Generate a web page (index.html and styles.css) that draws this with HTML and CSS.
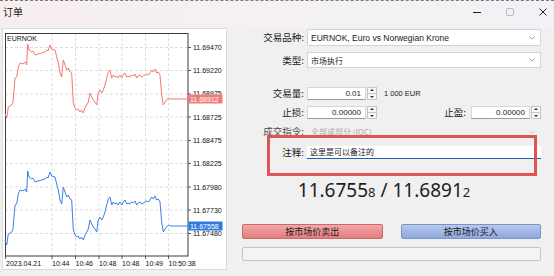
FILE: index.html
```html
<!DOCTYPE html>
<html lang="zh-CN">
<head>
    <meta charset="UTF-8">
    <title>订单</title>
    <link rel="stylesheet" href="styles.css">
</head>
<body>
    <div class="titlebar">
        <span class="title">订单</span>
        <div class="controls">
            <svg width="8" height="8" viewBox="0 0 8 8"><line x1="0" y1="4.5" x2="8" y2="4.5" stroke="#222" stroke-width="1"/></svg>
            <svg width="8" height="8" viewBox="0 0 8 8"><rect x="0.5" y="0.5" width="7" height="7" rx="1" fill="none" stroke="#b8b8b8" stroke-width="1"/></svg>
            <svg width="8" height="8" viewBox="0 0 8 8"><path d="M0.5 0.5 L7.5 7.5 M7.5 0.5 L0.5 7.5" stroke="#222" stroke-width="1"/></svg>
        </div>
    </div>

    <div class="content">
        <!-- tick chart -->
        <div class="chart-frame">
            <svg class="chart" width="223" height="240" viewBox="3 29 223 240">
                <defs>
                    <polyline id="ticks-line" points="5,113 6.7,118 8.3,107 11.7,105 13,102 15,78 16.7,77 18.3,67 20,63 23,64 25,62 26.7,65 27.7,44 29,50 31.7,52 33,51 35,55 38,54 41.7,53 45,52 46.7,50 48,51 50,45 51.7,49 55,50 56.7,57 58.3,63 60,73 61.7,77 63.3,60 65,65 66.7,70 68.3,68 70,72 71.7,73 73.3,103 75,108 76.7,110 78,109 80,112 81.5,110 83.3,113 85,108 86.7,105 88.3,102 90,93 91.7,97 93.3,100 95,102 96.7,105 98.3,93 100,90 101.7,93 103.3,90 105,85 106.7,78 108.3,72 110,70 111.7,78 113.3,75 115,77 116.7,76 118,78 120,75 121.7,78 123.3,75 125,73 126.7,77 128,76 130,77 131.5,75 133.3,76 135,74 136.7,78 138,76 140,75 141.5,77 143.3,76 145,75 146.7,74 148.5,75 150,73 151.7,70 153.3,72 155,69 156.7,73 158.3,72 160,75 161.7,95 163.3,105 165,102 166.7,100 168.3,98 170,99 188,99"/>
                </defs>
                <g class="grid">
                    <line x1="5" y1="47.5" x2="188" y2="47.5"/>
                    <line x1="5" y1="70.5" x2="188" y2="70.5"/>
                    <line x1="5" y1="94" x2="188" y2="94"/>
                    <line x1="5" y1="117" x2="188" y2="117"/>
                    <line x1="5" y1="140.5" x2="188" y2="140.5"/>
                    <line x1="5" y1="163.5" x2="188" y2="163.5"/>
                    <line x1="5" y1="187" x2="188" y2="187"/>
                    <line x1="5" y1="210" x2="188" y2="210"/>
                    <line x1="5" y1="233.5" x2="188" y2="233.5"/>
                    <line x1="52" y1="33" x2="52" y2="256"/>
                    <line x1="75.5" y1="33" x2="75.5" y2="256"/>
                    <line x1="99" y1="33" x2="99" y2="256"/>
                    <line x1="122" y1="33" x2="122" y2="256"/>
                    <line x1="145.5" y1="33" x2="145.5" y2="256"/>
                    <line x1="168.5" y1="33" x2="168.5" y2="256"/>
                </g>
                <g class="ticks">
                    <line x1="188" y1="47.5" x2="191" y2="47.5"/>
                    <line x1="188" y1="70.5" x2="191" y2="70.5"/>
                    <line x1="188" y1="94" x2="191" y2="94"/>
                    <line x1="188" y1="117" x2="191" y2="117"/>
                    <line x1="188" y1="140.5" x2="191" y2="140.5"/>
                    <line x1="188" y1="163.5" x2="191" y2="163.5"/>
                    <line x1="188" y1="187" x2="191" y2="187"/>
                    <line x1="188" y1="210" x2="191" y2="210"/>
                    <line x1="188" y1="233.5" x2="191" y2="233.5"/>
                    <line x1="5.5" y1="256" x2="5.5" y2="259"/>
                    <line x1="52" y1="256" x2="52" y2="259"/>
                    <line x1="75.5" y1="256" x2="75.5" y2="259"/>
                    <line x1="99" y1="256" x2="99" y2="259"/>
                    <line x1="122" y1="256" x2="122" y2="259"/>
                    <line x1="145.5" y1="256" x2="145.5" y2="259"/>
                    <line x1="168.5" y1="256" x2="168.5" y2="259"/>
                </g>
                <rect class="plot" x="5.5" y="33.5" width="182.5" height="222.5"/>

                <use href="#ticks-line" class="line-ask"/>
                <use href="#ticks-line" class="line-bid" transform="translate(0,127)"/>

                <g class="axis">
                    <text x="7" y="41">EURNOK</text>
                    <text x="193" y="50">11.69470</text>
                    <text x="193" y="73">11.69220</text>
                    <text x="193" y="96">11.68975</text>
                    <text x="193" y="119.5">11.68725</text>
                    <text x="193" y="143">11.68475</text>
                    <text x="193" y="166">11.68225</text>
                    <text x="193" y="189.5">11.67980</text>
                    <text x="193" y="212.5">11.67730</text>
                    <text x="193" y="236">11.67480</text>
                    <text x="6" y="266">2023.04.21</text>
                    <text x="52" y="266">10:44</text>
                    <text x="75.5" y="266">10:46</text>
                    <text x="99" y="266">10:48</text>
                    <text x="122" y="266">10:48</text>
                    <text x="145.5" y="266">10:49</text>
                    <text x="168.5" y="266">10:50:38</text>
                </g>

                <rect class="tag-ask" x="188.5" y="94.5" width="34" height="9"/>
                <text class="tag-text" x="190" y="101.5">11.68912</text>
                <rect class="tag-bid" x="188.5" y="221.5" width="34" height="9"/>
                <text class="tag-text" x="190" y="228.5">11.67558</text>
            </svg>
        </div>

        <!-- order form -->
        <div class="form">
            <div class="row row-symbol">
                <span class="label">交易品种:</span>
                <div class="select">
                    <span class="latin">EURNOK, Euro vs Norwegian Krone</span>
                    <svg class="chev" width="6" height="4" viewBox="0 0 6 4"><polyline points="0.5,0.5 3,3.2 5.5,0.5" fill="none" stroke="#8a8a8a" stroke-width="0.8"/></svg>
                </div>
            </div>
            <div class="row row-type">
                <span class="label">类型:</span>
                <div class="select">
                    <span class="cjk-val">市场执行</span>
                    <svg class="chev" width="6" height="4" viewBox="0 0 6 4"><polyline points="0.5,0.5 3,3.2 5.5,0.5" fill="none" stroke="#8a8a8a" stroke-width="0.8"/></svg>
                </div>
            </div>
            <div class="row row-volume">
                <span class="label">交易量:</span>
                <div class="num">0.01</div>
                <div class="spin"><span class="up"></span><span class="down"></span></div>
                <span class="lot">1 000 EUR</span>
            </div>
            <div class="row row-stops">
                <span class="label">止损:</span>
                <div class="num">0.00000</div>
                <div class="spin"><span class="up"></span><span class="down"></span></div>
                <span class="label label-tp">止盈:</span>
                <div class="num">0.00000</div>
                <div class="spin"><span class="up"></span><span class="down"></span></div>
            </div>
            <div class="row row-fill">
                <span class="label label-dim">成交指令:</span>
                <div class="select select-disabled">
                    <span class="cjk-val">全部或部分 (IOC)</span>
                    <svg class="chev" width="6" height="4" viewBox="0 0 6 4"><polyline points="0.5,0.5 3,3.2 5.5,0.5" fill="none" stroke="#c4c4c4" stroke-width="0.8"/></svg>
                </div>
            </div>
            <div class="row row-comment">
                <span class="label">注释:</span>
                <div class="comment">这里是可以备注的</div>
            </div>

            <div class="quote">11.6755<span class="small">8</span> / 11.6891<span class="small">2</span></div>

            <div class="actions">
                <button class="btn btn-sell">按市场价卖出</button>
                <button class="btn btn-buy">按市场价买入</button>
            </div>
            <div class="progress"></div>
        </div>
    </div>

    <!-- highlight drawn over the comment field -->
    <div class="mark"></div>
</body>
</html>
```

FILE: styles.css
```css
body {
    margin: 0;
    width: 554px;
    height: 276px;
    overflow: hidden;
    position: relative;
    background-color: #f0f0f0;
    font-family: "Noto Sans CJK SC", sans-serif;
    color: #1a1a1a;
}

/* title bar */
.titlebar {
    height: 27px;
    box-sizing: border-box;
    padding-bottom: 5px;
    border-top: 1px dashed #7a7a7a;
    background: linear-gradient(90deg, #f7eef0, #f4f1f4 60%, #f3f1f5);
    display: flex;
    align-items: center;
    justify-content: space-between;
}

.title {
    font-size: 10px;
    margin-left: 3px;
}

.controls {
    display: flex;
    gap: 25px;
    margin-right: 7px;
}

.controls svg {
    display: block;
}

.content {
    display: flex;
    height: 249px;
}

/* chart */
.chart-frame {
    margin: 1px 0 0 2px;
    width: 223px;
    height: 240px;
    border: 1px solid #dadada;
    background-color: #fff;
}

.chart {
    display: block;
}

.grid line {
    stroke: #d6d6d6;
    stroke-width: 0.8;
    stroke-dasharray: 3 2;
}

.ticks line {
    stroke: #333;
    stroke-width: 0.8;
}

.plot {
    fill: none;
    stroke: #3a3a3a;
    stroke-width: 1;
}

.line-ask,
.line-bid {
    fill: none;
    stroke-width: 1;
}

.line-ask {
    stroke: #f07a74;
}

.line-bid {
    stroke: #3e7fe0;
}

.axis text {
    font-family: "Liberation Sans", sans-serif;
    font-size: 7px;
    fill: #111;
}

.tag-ask {
    fill: #f27b77;
}

.tag-bid {
    fill: #2f79e2;
}

.tag-text {
    font-family: "Liberation Sans", sans-serif;
    font-size: 7px;
    fill: #fff;
}

/* form */
.form {
    flex: 1;
    padding: 2px 13px 0 0;
}

.row {
    display: flex;
    align-items: center;
}

.label {
    width: 77px;
    margin-right: 3px;
    text-align: right;
    font-size: 9.5px;
    line-height: 13px;
    white-space: nowrap;
}

.row-symbol .select {
    height: 17px;
}

.row-type {
    margin-top: 6px;
}

.row-volume {
    margin-top: 19px;
}

.row-stops {
    margin-top: 6px;
}

.row-fill {
    margin-top: 6px;
}

.row-comment {
    margin-top: 8px;
}

.select {
    width: 234px;
    height: 16px;
    box-sizing: border-box;
    padding: 0 5px 0 3px;
    border: 1px solid #d3d3d3;
    border-radius: 1px;
    background-color: #fff;
    display: flex;
    align-items: center;
    justify-content: space-between;
}

.select-disabled {
    height: 13px;
    border-color: transparent;
    background-color: transparent;
    color: #ababab;
}

.latin {
    font-family: "Liberation Sans", sans-serif;
    font-size: 8.5px;
}

.cjk-val {
    font-size: 8px;
}

.chev {
    display: block;
}

.label-dim {
    color: #4a4a4a;
}

.num {
    width: 59px;
    height: 13px;
    box-sizing: border-box;
    padding-right: 4px;
    border: 1px solid #d6d6d6;
    border-bottom-color: #9c9c9c;
    background-color: #fff;
    text-align: right;
    font-family: "Liberation Sans", sans-serif;
    font-size: 8px;
    line-height: 11px;
}

.spin {
    width: 10px;
    height: 13px;
    box-sizing: border-box;
    margin-left: 1px;
    border: 1px solid #c6c6c6;
    background-color: #f6f6f6;
    display: flex;
    flex-direction: column;
}

.spin span {
    flex: 1;
    position: relative;
}

.spin .up {
    border-bottom: 1px solid #c6c6c6;
}

.spin .up::after,
.spin .down::after {
    content: "";
    position: absolute;
    left: 2px;
    border-left: 2px solid transparent;
    border-right: 2px solid transparent;
}

.spin .up::after {
    top: 1px;
    border-bottom: 2px solid #333;
}

.spin .down::after {
    top: 1.5px;
    border-top: 2px solid #333;
}

.lot {
    margin-left: 7px;
    font-family: "Liberation Sans", sans-serif;
    font-size: 7.5px;
}

.label-tp {
    width: 89px;
    margin-right: 5px;
}

.comment {
    width: 234px;
    height: 13px;
    box-sizing: border-box;
    padding-left: 3px;
    background-color: #fff;
    border-bottom: 1px solid #1b5fb5;
    font-size: 8px;
    line-height: 12px;
}

.quote {
    margin-top: 21px;
    text-align: center;
    font-family: "Noto Sans", sans-serif;
    font-size: 19px;
    line-height: 20px;
    color: #1d1d1d;
}

.quote .small {
    font-size: 13px;
}

.actions {
    display: flex;
    gap: 18px;
    margin: 22px 0 0 15px;
}

.btn {
    flex: 1;
    height: 15px;
    padding: 0;
    border-radius: 2px;
    font-family: "Noto Sans CJK SC", sans-serif;
    font-size: 9px;
    line-height: 13px;
    color: #1a1a1a;
}

.btn-sell {
    border: 1px solid #c86a6a;
    background: linear-gradient(#f4a7a7, #e57d7d);
}

.btn-buy {
    border: 1px solid #7b92c6;
    background: linear-gradient(#b6c9ee, #8ea8dc);
}

.progress {
    margin: 8px 0 0 15px;
    height: 14px;
    box-sizing: border-box;
    border: 1px solid #c4c4c4;
    border-radius: 2px;
    background-color: #f4f4f4;
}

/* red annotation box */
.mark {
    position: absolute;
    left: 267px;
    top: 135px;
    width: 270px;
    height: 41px;
    box-sizing: border-box;
    border: 3px solid #e05454;
    pointer-events: none;
}
```
